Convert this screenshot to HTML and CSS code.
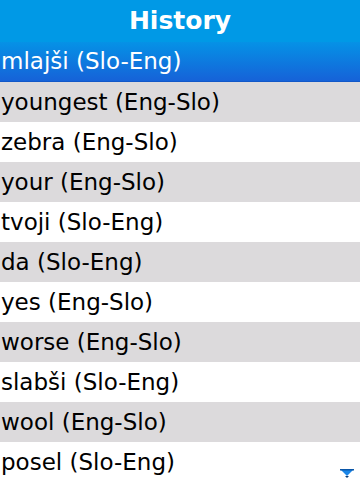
FILE: index.html
```html
<!DOCTYPE html>
<html lang="en">
<head>
  <meta charset="UTF-8">
  <title>History</title>
  <link rel="stylesheet" href="styles.css">
</head>
<body>
  <div class="screen">
    <h1 class="title-bar">History</h1>

    <ul class="history-list">
      <li class="selected">mlajši (Slo-Eng)</li>
      <li>youngest (Eng-Slo)</li>
      <li>zebra (Eng-Slo)</li>
      <li>your (Eng-Slo)</li>
      <li>tvoji (Slo-Eng)</li>
      <li>da (Slo-Eng)</li>
      <li>yes (Eng-Slo)</li>
      <li>worse (Eng-Slo)</li>
      <li>slabši (Slo-Eng)</li>
      <li>wool (Eng-Slo)</li>
      <li>posel (Slo-Eng)</li>
    </ul>

    <!-- scroll indicator -->
    <svg class="scroll-down" width="14" height="9" viewBox="0 0 14 9">
      <polygon points="0,0 14,0 7,7" fill="#1a86e8"/>
      <polygon points="5,7 9,7 7,9" fill="#0a3c7a"/>
      <rect x="0" y="0" width="14" height="1.5" fill="#0a56a8"/>
    </svg>
  </div>
</body>
</html>
```

FILE: styles.css
```css
body {
  margin: 0;
  background: #fff;
  font-family: 'DejaVu Sans', Verdana, sans-serif;
  color: #000;
}

.screen {
  position: relative;
  width: 360px;
  height: 480px;
  overflow: hidden;
}

.title-bar {
  margin: 0;
  height: 42px;
  line-height: 42px;
  text-align: center;
  font-size: 25px;
  font-weight: bold;
  color: #fff;
  background: #0099e6;
}

.history-list {
  list-style: none;
  margin: 0;
  padding: 0;
}

.history-list li {
  height: 40px;
  line-height: 40px;
  padding-left: 1px;
  font-size: 23px;
  white-space: nowrap;
}

.history-list li:nth-child(even) {
  background: #dcdadc;
}

.history-list li.selected {
  height: 39px;
  line-height: 38px;
  color: #fff;
  background: linear-gradient(#0592e6, #1662d8);
  border-bottom: 1px solid #1258c8;
}

.scroll-down {
  position: absolute;
  right: 6px;
  bottom: 2px;
}
```
